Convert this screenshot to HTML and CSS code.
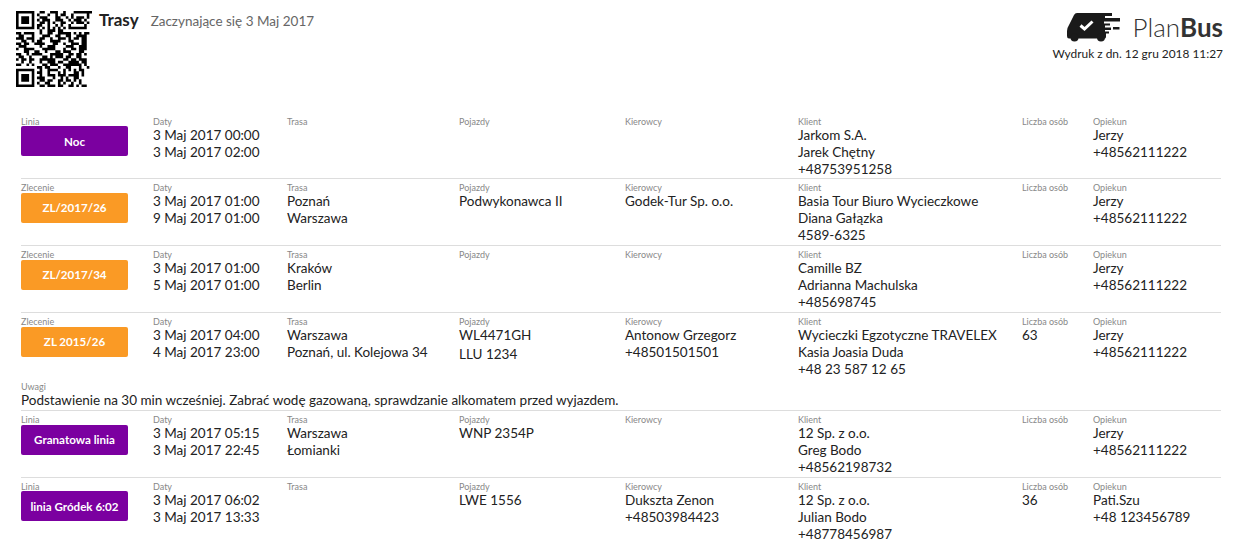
FILE: index.html
```html
<!DOCTYPE html>
<html lang="pl">
<head>
<meta charset="utf-8">
<title>Trasy</title>
<link rel="stylesheet" href="styles.css">
</head>
<body>
<header class="top">
  <svg class="qr" viewBox="0 0 29 29" width="76" height="76" aria-hidden="true"><path fill="none" stroke="#000" d="M0 .5h7m2 0h2m2 0h3m2 0h1m3 0h7M0 1.5h1m5 0h1m1 0h1m3 0h1m2 0h1m1 0h2m2 0h1m5 0h1M0 2.5h1m1 0h3m1 0h1m2 0h3m3 0h2m2 0h1m1 0h1m1 0h3m1 0h1M0 3.5h1m1 0h3m1 0h1m1 0h1m1 0h3m2 0h3m2 0h1m1 0h3m1 0h1M0 4.5h1m1 0h3m1 0h1m2 0h2m1 0h1m1 0h1m2 0h2m2 0h1m1 0h3m1 0h1M0 5.5h1m5 0h1m1 0h2m2 0h1m2 0h1m1 0h1m2 0h1m5 0h1M0 6.5h7m1 0h1m1 0h1m1 0h1m1 0h1m1 0h1m1 0h1m1 0h7M9 7.5h1m2 0h3m1 0h2M0 8.5h2m1 0h4m2 0h1m2 0h2m2 0h5m1 0h1m1 0h1m1 0h2M1 9.5h2m3 0h1m3 0h3m2 0h2m2 0h2m2 0h4M0 10.5h3m1 0h3m2 0h2m2 0h1m2 0h3m1 0h1m1 0h2m1 0h2M2 11.5h2m2 0h1m1 0h2m3 0h4m3 0h2m3 0h2M0 12.5h2m1 0h2m2 0h4m3 0h2m2 0h1m2 0h3m1 0h2M1 13.5h3m5 0h1m2 0h3m4 0h3m2 0h3M0 14.5h1m2 0h4m3 0h5m3 0h1m2 0h2m1 0h3M3 15.5h2m2 0h2m2 0h1m3 0h2m1 0h3m3 0h2M0 16.5h2m2 0h1m1 0h4m3 0h5m2 0h2m1 0h2m1 0h1M1 17.5h2m2 0h1m4 0h2m1 0h1m1 0h3m1 0h2m2 0h2M0 18.5h1m1 0h2m1 0h2m2 0h6m3 0h2m1 0h2m1 0h3M2 19.5h1m2 0h1m3 0h1m2 0h3m1 0h2m2 0h4m1 0h2M0 20.5h2m2 0h1m1 0h1m3 0h2m1 0h3m2 0h7m1 0h1M8 21.5h2m1 0h2m3 0h1m2 0h2m3 0h1m2 0h1M0 22.5h7m2 0h1m2 0h4m2 0h1m1 0h1m1 0h1m1 0h2M0 23.5h1m5 0h1m1 0h2m2 0h1m3 0h1m1 0h1m3 0h2m1 0h1M0 24.5h1m1 0h3m1 0h1m2 0h1m2 0h3m1 0h3m1 0h4m1 0h1M0 25.5h1m1 0h3m1 0h1m1 0h3m3 0h1m2 0h1m1 0h1m2 0h2M0 26.5h1m1 0h3m1 0h1m2 0h2m1 0h2m2 0h2m1 0h2m1 0h1m1 0h1M0 27.5h1m5 0h1m1 0h1m2 0h2m3 0h1m1 0h1m2 0h1m2 0h1M0 28.5h7m2 0h2m1 0h3m1 0h2m2 0h2m1 0h1m1 0h2"/></svg>
  <div class="heading">
    <span class="title">Trasy</span>
    <span class="subtitle">Zaczynające się 3 Maj 2017</span>
  </div>
  <div class="brand">
    <div class="logo">
      <svg class="van" viewBox="0 0 54 30" width="54" height="30" aria-hidden="true">
        <path d="M10 1H45V4H38V6H53V9.500H37V11.500H43V13.500H38V15.500H44V18H38V19.500H42V21.500H39V25Q39 26.500 37 26.500H2Q0 26.500 0 24V19Q0 16 2 13L7 3Q8 1 10 1Z"/>
        <circle cx="7.500" cy="25.500" r="4"/><circle cx="34" cy="25.500" r="4"/>
        <path d="M46 15h6.500v2.500h-6.500z"/>
        <path class="check" d="M13.500 13.500l4 3.500 8-7.500"/>
      </svg>
      <span class="plan">Plan<b>Bus</b></span>
    </div>
    <div class="printed">Wydruk z dn. 12 gru 2018 11:27</div>
  </div>
</header>
<main class="list">
  <section class="row">
    <div class="cell"><label>Linia</label><div class="badge purple">Noc</div></div>
    <div class="cell"><label>Daty</label><p>3 Maj 2017 00:00</p><p>3 Maj 2017 02:00</p></div>
    <div class="cell"><label>Trasa</label></div>
    <div class="cell"><label>Pojazdy</label></div>
    <div class="cell"><label>Kierowcy</label></div>
    <div class="cell"><label>Klient</label><p>Jarkom S.A.</p><p>Jarek Chętny</p><p>+48753951258</p></div>
    <div class="cell"><label>Liczba osób</label></div>
    <div class="cell"><label>Opiekun</label><p>Jerzy</p><p>+48562111222</p></div>
  </section>
  <section class="row">
    <div class="cell"><label>Zlecenie</label><div class="badge orange">ZL/2017/26</div></div>
    <div class="cell"><label>Daty</label><p>3 Maj 2017 01:00</p><p>9 Maj 2017 01:00</p></div>
    <div class="cell"><label>Trasa</label><p>Poznań</p><p>Warszawa</p></div>
    <div class="cell"><label>Pojazdy</label><p>Podwykonawca II</p></div>
    <div class="cell"><label>Kierowcy</label><p>Godek-Tur Sp. o.o.</p></div>
    <div class="cell"><label>Klient</label><p>Basia Tour Biuro Wycieczkowe</p><p>Diana Gałązka</p><p>4589-6325</p></div>
    <div class="cell"><label>Liczba osób</label></div>
    <div class="cell"><label>Opiekun</label><p>Jerzy</p><p>+48562111222</p></div>
  </section>
  <section class="row">
    <div class="cell"><label>Zlecenie</label><div class="badge orange">ZL/2017/34</div></div>
    <div class="cell"><label>Daty</label><p>3 Maj 2017 01:00</p><p>5 Maj 2017 01:00</p></div>
    <div class="cell"><label>Trasa</label><p>Kraków</p><p>Berlin</p></div>
    <div class="cell"><label>Pojazdy</label></div>
    <div class="cell"><label>Kierowcy</label></div>
    <div class="cell"><label>Klient</label><p>Camille BZ</p><p>Adrianna Machulska</p><p>+485698745</p></div>
    <div class="cell"><label>Liczba osób</label></div>
    <div class="cell"><label>Opiekun</label><p>Jerzy</p><p>+48562111222</p></div>
  </section>
  <section class="row has-note">
    <div class="cell"><label>Zlecenie</label><div class="badge orange">ZL 2015/26</div></div>
    <div class="cell"><label>Daty</label><p>3 Maj 2017 04:00</p><p>4 Maj 2017 23:00</p></div>
    <div class="cell"><label>Trasa</label><p>Warszawa</p><p>Poznań, ul. Kolejowa 34</p></div>
    <div class="cell"><label>Pojazdy</label><p class="vehicle">WL4471GH</p><p class="vehicle">LLU 1234</p></div>
    <div class="cell"><label>Kierowcy</label><p>Antonow Grzegorz</p><p>+48501501501</p></div>
    <div class="cell"><label>Klient</label><p>Wycieczki Egzotyczne TRAVELEX</p><p>Kasia Joasia Duda</p><p>+48 23 587 12 65</p></div>
    <div class="cell"><label>Liczba osób</label><p>63</p></div>
    <div class="cell"><label>Opiekun</label><p>Jerzy</p><p>+48562111222</p></div>
    <div class="note"><label>Uwagi</label><p>Podstawienie na 30 min wcześniej. Zabrać wodę gazowaną, sprawdzanie alkomatem przed wyjazdem.</p></div>
  </section>
  <section class="row">
    <div class="cell"><label>Linia</label><div class="badge purple">Granatowa linia</div></div>
    <div class="cell"><label>Daty</label><p>3 Maj 2017 05:15</p><p>3 Maj 2017 22:45</p></div>
    <div class="cell"><label>Trasa</label><p>Warszawa</p><p>Łomianki</p></div>
    <div class="cell"><label>Pojazdy</label><p>WNP 2354P</p></div>
    <div class="cell"><label>Kierowcy</label></div>
    <div class="cell"><label>Klient</label><p>12 Sp. z o.o.</p><p>Greg Bodo</p><p>+48562198732</p></div>
    <div class="cell"><label>Liczba osób</label></div>
    <div class="cell"><label>Opiekun</label><p>Jerzy</p><p>+48562111222</p></div>
  </section>
  <section class="row">
    <div class="cell"><label>Linia</label><div class="badge purple">linia Gródek 6:02</div></div>
    <div class="cell"><label>Daty</label><p>3 Maj 2017 06:02</p><p>3 Maj 2017 13:33</p></div>
    <div class="cell"><label>Trasa</label></div>
    <div class="cell"><label>Pojazdy</label><p>LWE 1556</p></div>
    <div class="cell"><label>Kierowcy</label><p>Dukszta Zenon</p><p>+48503984423</p></div>
    <div class="cell"><label>Klient</label><p>12 Sp. z o.o.</p><p>Julian Bodo</p><p>+48778456987</p></div>
    <div class="cell"><label>Liczba osób</label><p>36</p></div>
    <div class="cell"><label>Opiekun</label><p>Pati.Szu</p><p>+48 123456789</p></div>
  </section>
</main>
</body>
</html>
```
FILE: styles.css
```css
* { box-sizing: border-box; }
html, body { margin: 0; padding: 0; background: #fff; }
body { font-family: Lato, "Liberation Sans", sans-serif; color: #222; font-size: 13.5px; overflow: hidden; height: 544px; }
p { margin: 0; }

.top { display: flex; align-items: flex-start; height: 112.5px; padding: 11px 16px 0 16px; }
.qr { display: block; flex: none; }
.heading { margin-left: 7px; display: flex; align-items: baseline; line-height: 20px; margin-top: -1px; }
.title { font-size: 17px; font-weight: 700; color: #222; }
.subtitle { font-size: 13.5px; color: #666; margin-left: 12px; }
.brand { margin-left: auto; display: flex; flex-direction: column; align-items: flex-end; }
.logo { display: flex; align-items: center; height: 30px; margin-top: 1px; }
.van { display: block; fill: #1a1a1a; margin-right: 12px; }
.van .check { fill: none; stroke: #fff; stroke-width: 3; }
.plan { font-size: 26px; font-weight: 300; color: #333; line-height: 30px; }
.plan b { font-weight: 700; }
.printed { font-size: 11.9px; color: #222; line-height: 14px; margin-top: 5px; }

.list { margin: 0 18px 0 21px; }
.row { display: grid; grid-template-columns: 132px 134px 172px 166px 173px 224px 71px 1fr; height: 66.8px; border-bottom: 1px solid #ddd; padding-top: 3px; }
.row.has-note { height: 98.1px; }
.note { grid-column: 1 / -1; margin-top: 2px; }
.cell { min-width: 0; }
label { display: block; font-size: 9px; line-height: 11px; color: #888; }
.cell p, .note p { line-height: 17px; color: #222; }
.vehicle { padding-bottom: 2px; }
.badge { width: 107px; height: 30px; margin-top: -0.4px; border-radius: 2px; color: #fff; font-size: 11.6px; font-weight: 700; display: flex; align-items: center; justify-content: center; }
.purple { background: #7b00a0; }
.orange { background: #fa9a25; }
```
